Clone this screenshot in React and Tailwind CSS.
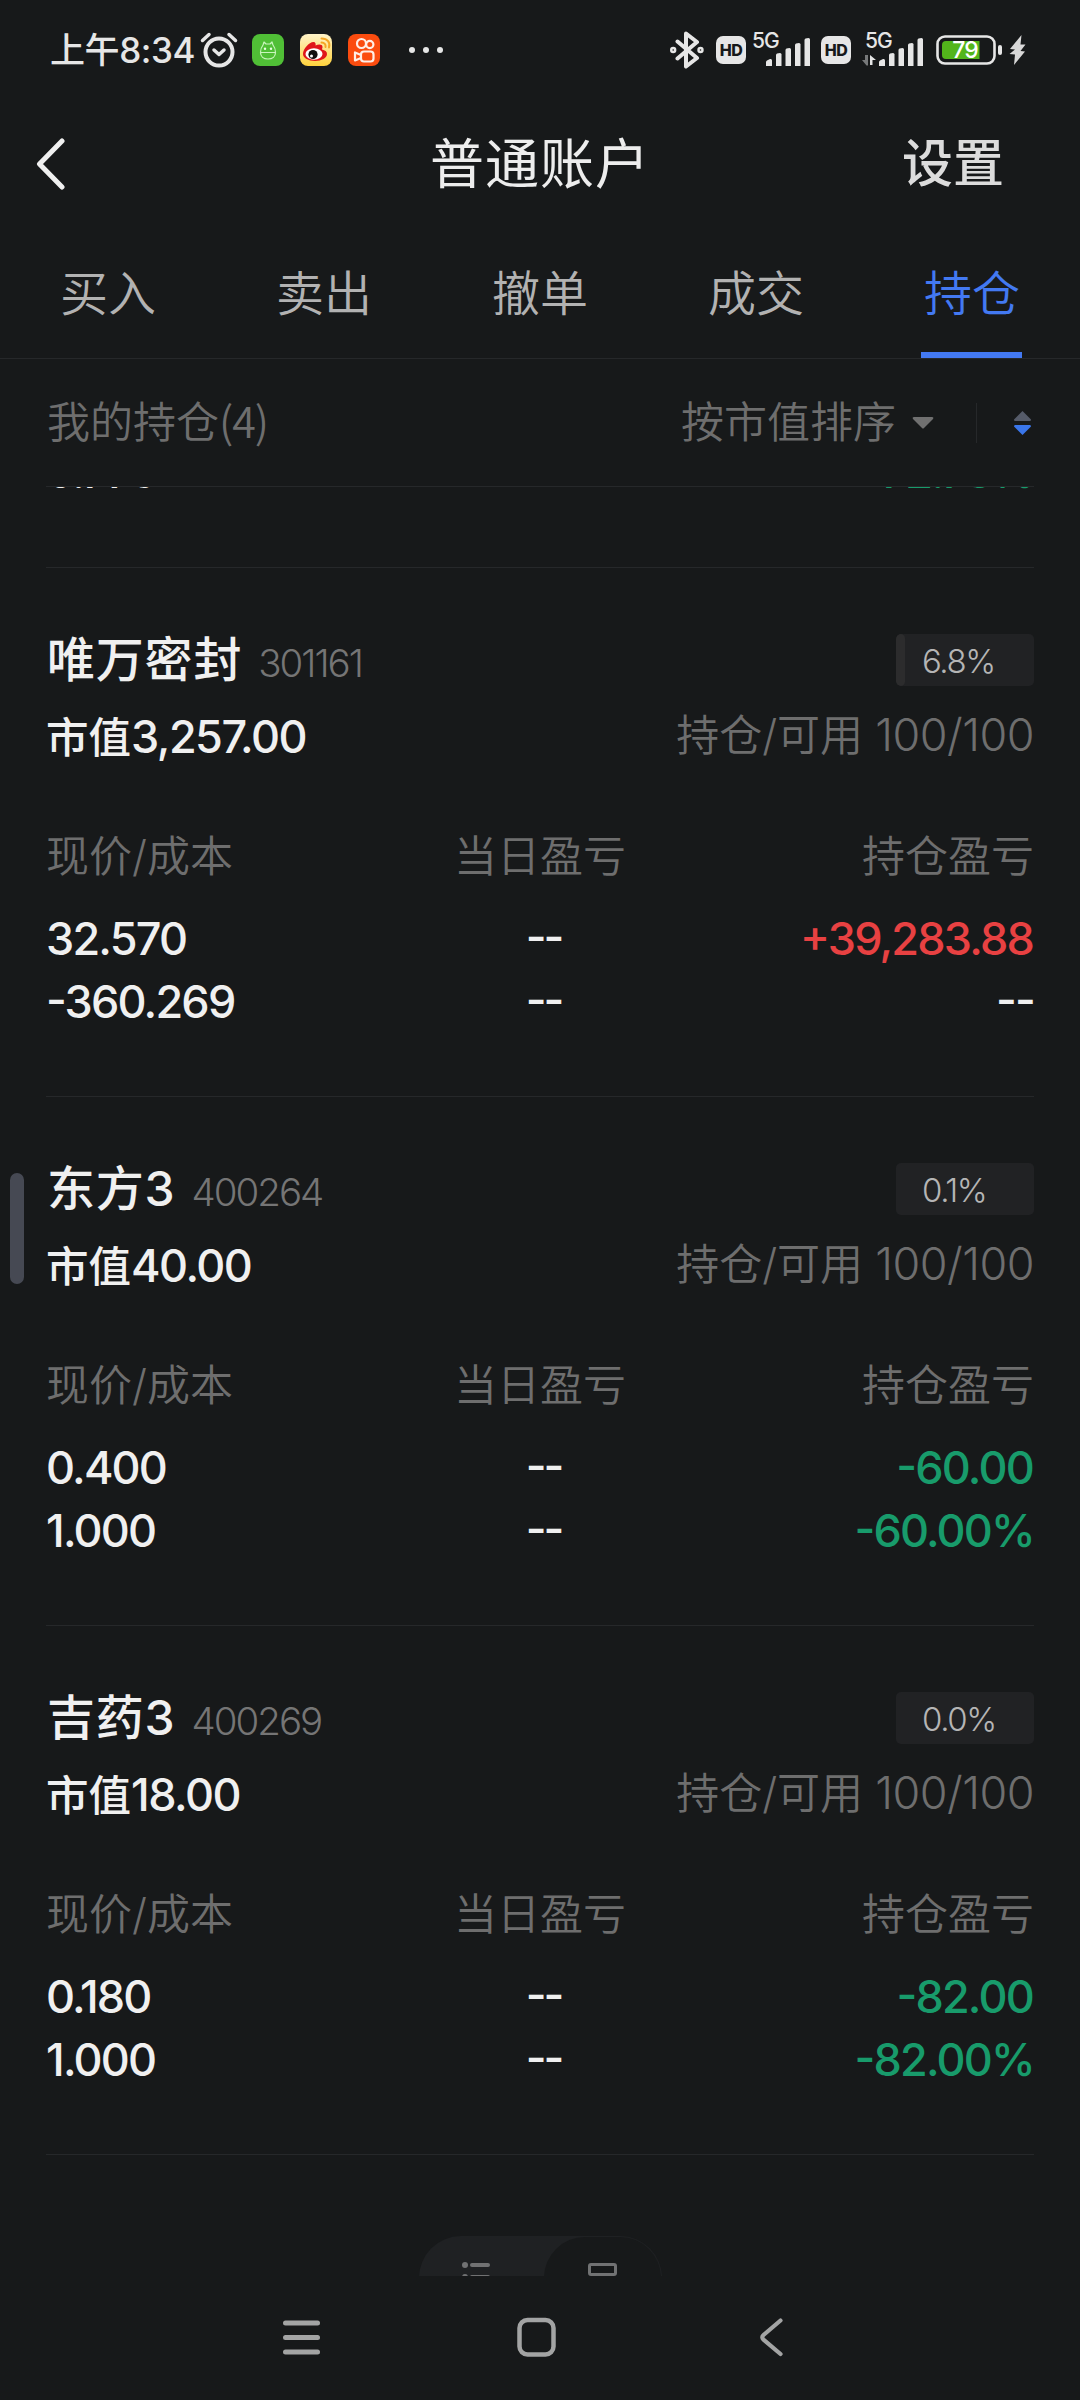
const TABS = ['买入', '卖出', '撤单', '成交', '持仓']

const TONES = {
  up: 'text-[#e84142]',
  down: 'text-[#189b6b]',
  flat: 'text-[#f0f0f0]',
}

const HOLDINGS = [
  { name: '唯万密封', code: '301161', share: 6.8, value: '3,257.00', price: '32.570', cost: '-360.269', pnl: '+39,283.88', pnlTone: 'up', pct: '--', pctTone: 'flat' },
  { name: '东方3', code: '400264', share: 0.1, value: '40.00', price: '0.400', cost: '1.000', pnl: '-60.00', pnlTone: 'down', pct: '-60.00%', pctTone: 'down' },
  { name: '吉药3', code: '400269', share: 0, value: '18.00', price: '0.180', cost: '1.000', pnl: '-82.00', pnlTone: 'down', pct: '-82.00%', pctTone: 'down' },
]

// ── Status bar ───────────────────────────────────────────────

function AlarmIcon() {
  return (
    <svg className="ml-[5px] shrink-0" width="38" height="36" viewBox="0 0 38 36" fill="none" stroke="#e6e6e6" strokeLinecap="round">
      <circle cx="19" cy="20" r="13.5" strokeWidth="4" />
      <path d="M2.500 8.500L9 2.500M35.500 8.500L29 2.500" strokeWidth="3.500" />
      <path d="M14 18l5 4.500 5-4.500" strokeWidth="3.500" strokeLinejoin="round" />
    </svg>
  )
}

function AppIcons() {
  return (
    <>
      <svg className="ml-[14px] shrink-0" width="32" height="32" viewBox="0 0 32 32" fill="none">
        <rect width="32" height="32" rx="8" fill="#50bf36" />
        <path d="M8.500 18.500h15c0 4-3 6.500-7.500 6.500s-7.500-2.500-7.500-6.500c0-3 .5-5 2.500-7.500l1-3 2 2h4l2-2 1 3c2 2.500 2.500 4.500 2.500 7.500" stroke="#c9f5bd" strokeWidth="1.200" strokeLinejoin="round" />
        <circle cx="13" cy="14.800" r="1.200" fill="#e9ffe2" />
        <circle cx="19" cy="14.800" r="1.200" fill="#e9ffe2" />
      </svg>
      <svg className="ml-4 shrink-0" width="32" height="32" viewBox="0 0 32 32" fill="none">
        <defs>
          <linearGradient id="wb" x1="0" y1="0" x2="0" y2="1">
            <stop offset="0" stopColor="#fff3c9" />
            <stop offset="1" stopColor="#ffd23c" />
          </linearGradient>
        </defs>
        <rect width="32" height="32" rx="8" fill="url(#wb)" />
        <path d="M3 20c0-5 6-12 10.500-12 2 0 2.500 2 2 3.500 3-1.500 7-1.500 7 1.500 0 1-.5 1.500-.5 2.500 3 .8 5 2 5 4.500 0 4-5.500 7-12 7S3 24 3 20z" fill="#e0161b" />
        <ellipse cx="14" cy="20" rx="8.500" ry="5.800" fill="#fff" />
        <circle cx="13" cy="20.500" r="4.600" fill="#111" />
        <circle cx="11.500" cy="22" r="1.500" fill="#fff" />
        <path d="M21.500 8.500c3 0 4.500 2 4 4.500M21.500 4.500c6 0 9 4 7.500 9" stroke="#f5a623" strokeWidth="2" strokeLinecap="round" />
      </svg>
      <svg className="ml-4 shrink-0" width="32" height="32" viewBox="0 0 32 32" fill="none" stroke="#ffeee6" strokeWidth="2.200">
        <rect width="32" height="32" rx="8" fill="#fb4c0f" stroke="none" />
        <circle cx="13.500" cy="9.500" r="4.500" />
        <circle cx="21.800" cy="10.500" r="3.600" />
        <rect x="13" y="17.500" width="12.500" height="10" rx="3" />
        <path d="M13 21l-6-2.500v8l6-2.500" strokeLinejoin="round" />
      </svg>
    </>
  )
}

function HdBadge() {
  return (
    <span className="flex h-[28px] w-[30px] shrink-0 items-center justify-center rounded-[7px] bg-[#e6e6e6] text-[16px] font-extrabold tracking-[-0.5px] text-[#17191a]">HD</span>
  )
}

function Signal({ data }) {
  return (
    <span className="relative ml-[6px] h-[34px] w-[58px] shrink-0">
      <span className="absolute -top-px left-0 text-[21px] leading-[18px] font-medium tracking-[-1px]">5G</span>
      <svg className="absolute inset-0" width="58" height="34" viewBox="0 0 58 34" fill="#e6e6e6">
        <path d="M14 33v-4q0-1 1-1.500l3-1.500q2-.5 2 1.500V33z" />
        <path d="M24 33V22q0-1 1-1.500l3-.5q1.500 0 1.500 1.500V33z" />
        <path d="M33.500 33V17q0-1 1-1.500l3-.5q1.500 0 1.500 1.500V33z" />
        <path d="M43 33V12q0-1 1-1.500l3-.5q1.500 0 1.500 1.500V33z" />
        <path d="M52.500 33V7q0-1 1-1.500l3-.5q1.500 0 1.500 1.500V33z" />
      </svg>
      {data && (
        <svg className="absolute top-[22px] -left-[3px]" width="14" height="11" viewBox="0 0 14 11">
          <path d="M0 5h3V0h3v10.500H4.500z" fill="#77797a" />
          <path d="M8 0v10h2.500V5H14z" fill="#e6e6e6" />
        </svg>
      )}
    </span>
  )
}

function StatusBar() {
  return (
    <div className="flex h-[100px] items-center pr-[54px] pl-[50px] text-[#e6e6e6]">
      <span className="w-[145px] text-[35px] font-medium tracking-[-0.4px] whitespace-nowrap">上午8:34</span>
      <AlarmIcon />
      <AppIcons />
      <svg className="ml-[29px] shrink-0" width="34" height="6" viewBox="0 0 34 6" fill="#e6e6e6">
        <circle cx="3" cy="3" r="3" />
        <circle cx="17" cy="3" r="3" />
        <circle cx="31" cy="3" r="3" />
      </svg>
      <div className="ml-auto flex items-center">
        <svg className="mr-3 shrink-0" width="34" height="38" viewBox="0 0 34 38" fill="none" stroke="#e6e6e6" strokeWidth="4" strokeLinejoin="round" strokeLinecap="round">
          <path d="M7.500 10.500L27 27l-11 8.500v-33L27 11 7.500 27.500" />
          <circle cx="3.200" cy="19" r="1.200" />
          <circle cx="30.500" cy="19" r="1.200" />
        </svg>
        <HdBadge />
        <Signal />
        <span className="w-[11px]" />
        <HdBadge />
        <span className="w-[8px]" />
        <Signal data />
        <svg className="ml-[13px] shrink-0" width="66" height="30" viewBox="0 0 66 30" fill="none">
          <rect x="1.500" y="1.500" width="57" height="27" rx="7.500" stroke="#e6e6e6" strokeWidth="2.600" />
          <path d="M10 6h33.500v18H10q-4 0-4-4V10q0-4 4-4z" fill="#52b51b" />
          <rect x="62" y="10" width="4" height="10" rx="2" fill="#e6e6e6" />
          <text x="29" y="23" textAnchor="middle" fontSize="23" fontWeight="500" letterSpacing="-1" fill="#fff">79</text>
        </svg>
        <svg className="ml-[7px] shrink-0" width="17" height="30" viewBox="0 0 17 30" fill="#d8d8d8">
          <path d="M12.500 0L1 14l5 .5L.5 19l5.500.5L5 30l11-13.500-4.500-.5 5-6.500h-5z" />
        </svg>
      </div>
    </div>
  )
}

// ── Header and tabs ──────────────────────────────────────────

function Header() {
  return (
    <header className="grid h-[126px] grid-cols-3 items-center pt-0.5 pr-[76px] pl-[36px] text-[#ededed]">
      <svg width="30" height="52" viewBox="0 0 30 52" fill="none" stroke="#f0f0f0" strokeWidth="5" strokeLinecap="round" strokeLinejoin="round">
        <path d="M26 3L3.500 26 26 49" />
      </svg>
      <h1 className="pl-[40px] text-center text-[54px] tracking-[1px] whitespace-nowrap">普通账户</h1>
      <button className="text-right text-[51px] font-medium text-[#dcdcdc]">设置</button>
    </header>
  )
}

function Tabs() {
  return (
    <nav className="grid h-[133px] grid-cols-5 border-b border-[#26282a] text-[48px] font-[350] text-[#b2b2b2]">
      {TABS.map(tab => (
        <div key={tab} className={`flex flex-col items-center ${tab === '持仓' ? 'text-[#4379f2]' : ''}`}>
          <span className="flex h-[126px] items-center pt-[10px]">{tab}</span>
          {tab === '持仓' && <span className="mr-px h-1.5 w-[101px] bg-[#4379f2]" />}
        </div>
      ))}
    </nav>
  )
}

function SortBar() {
  return (
    <div className="mr-[46px] ml-[46px] flex h-[128px] items-center border-b border-[#26282a] text-[43px] leading-none font-[350] text-[#6e6e6e]">
      <span className="pb-1 pl-px">
        我的持仓<span className="font-['Noto_Sans_CJK_SC'] tracking-[-1px]">(4)</span>
      </span>
      <span className="ml-auto">按市值排序</span>
      <svg className="ml-[16px]" width="22" height="12" viewBox="0 0 22 12" fill="#707070">
        <path d="M2 0h18q2 0 1 2l-9 9q-1 1-2 0L1 2Q0 0 2 0z" />
      </svg>
      <span className="ml-[42px] h-10 w-px bg-[#26282a]" />
      <svg className="mr-[3px] ml-[37px]" width="17" height="24" viewBox="0 0 17 24">
        <path d="M8.500 0L17 8.500q0 1.500-1 1.500H1q-1 0-1-1.500z" fill="#555b69" />
        <path d="M8.500 24L17 15.500q0-1.500-1-1.500H1q-1 0-1 1.500z" fill="#3a76ea" />
      </svg>
    </div>
  )
}

// ── Holdings ─────────────────────────────────────────────────

// last line of the first holding, scrolled under the sort bar
function ClippedRow() {
  return (
    <div className="mx-[46px] flex h-[81px] items-start justify-between overflow-hidden border-b border-[#26282a] text-[45px] leading-none font-medium tracking-[-2px]">
      <span className="-mt-[38px] text-[#f0f0f0]">0.779</span>
      <span className="-mt-[38px] text-[#189b6b]">-72.78%</span>
    </div>
  )
}

function HoldingCard({ item }) {
  return (
    <section className="mx-[46px] h-[529px] border-b border-[#26282a] pt-[60px] text-[#f0f0f0]">
      <div className="flex h-[62px] items-center pl-px">
        <h2 className="pt-0.5 text-[48px] font-medium tracking-[0.8px]">{item.name}</h2>
        <span className="mt-2.5 ml-[16px] text-[38.5px] font-light tracking-[-2px] text-[#757575]">{item.code}</span>
        <div className="relative mt-0.5 ml-auto flex h-[52px] w-[138px] items-center overflow-hidden rounded-[5px] bg-[#212224] pt-1 pl-[26px]">
          <span className="absolute inset-y-0 left-0 rounded-[5px] bg-[#2c2c2d]" style={{ width: `${item.share > 1 ? item.share : 0}%` }} />
          <span className="text-[33px] font-light tracking-[-1.4px] text-[#b5b5b5]">{item.share.toFixed(1)}%</span>
        </div>
      </div>
      <div className="mt-4 flex h-[60px] items-center justify-between">
        <span className="pt-0.5 text-[42.5px] font-medium">
          市值<span className="text-[45px] tracking-[-1.5px]">{item.value}</span>
        </span>
        <span className="pb-0.5 text-[43px] font-[350] text-[#6e6e6e]">
          持仓/可用 <span className="text-[45px] font-[350] tracking-[-0.5px]">100/100</span>
        </span>
      </div>
      <div className="mt-[58px] grid h-[62px] grid-cols-3 items-center text-[43px] font-[350] text-[#6e6e6e]">
        <span>现价/成本</span>
        <span className="text-center">当日盈亏</span>
        <span className="text-right">持仓盈亏</span>
      </div>
      <div className="mt-[21px] grid grid-cols-3 text-[45px] leading-[63px] font-medium tracking-[-1.8px] [font-feature-settings:'case']">
        <span>{item.price}</span>
        <span className="pl-[7px] text-center tracking-[-3px]">--</span>
        <span className={`pr-px text-right ${TONES[item.pnlTone]}`}>{item.pnl}</span>
        <span>{item.cost}</span>
        <span className="pl-[7px] text-center tracking-[-3px]">--</span>
        <span className={`text-right ${TONES[item.pctTone]}`}>{item.pct}</span>
      </div>
    </section>
  )
}

// ── Bottom ───────────────────────────────────────────────────

function ViewSwitch() {
  return (
    <div className="flex h-[121px] items-start justify-center overflow-hidden pt-[81px] pl-px">
      <div className="flex h-[84px] w-[243px] shrink-0 justify-end rounded-full bg-[#1f2123] p-px">
        <div className="flex flex-1 justify-center pt-[25px] pr-[12px]">
          <svg width="28" height="24" viewBox="0 0 28 24" fill="#717273">
            <circle cx="3" cy="3" r="3" />
            <rect x="8" y="1" width="20" height="4" rx="2" />
            <circle cx="3" cy="15" r="3" />
            <rect x="8" y="13" width="20" height="4" rx="2" />
          </svg>
        </div>
        <div className="flex w-[117px] justify-center rounded-full bg-[#17191a] pt-[26px]">
          <span className="h-[13px] w-[29px] rounded-[3px] border-[3px] border-[#717273]" />
        </div>
      </div>
    </div>
  )
}

function NavBar() {
  return (
    <div className="flex h-[124px] items-start pt-[41px] pl-[283px]">
      <svg width="37" height="40" viewBox="0 0 37 40" fill="#a3a4a4">
        <rect y="3.500" width="37" height="5" rx="2.500" />
        <rect y="18" width="37" height="5" rx="2.500" />
        <rect y="32.500" width="37" height="5" rx="2.500" />
      </svg>
      <svg className="ml-[197px]" width="39" height="40" viewBox="0 0 39 40" fill="none" stroke="#a3a4a4" strokeWidth="4.500">
        <rect x="2.500" y="3" width="34" height="34.500" rx="8" />
      </svg>
      <svg className="ml-[203px]" width="24" height="40" viewBox="0 0 24 40" fill="none" stroke="#a3a4a4" strokeWidth="4.200" strokeLinecap="round">
        <path d="M21.500 3.500L4.500 18q-2.500 2.300 0 4.600L21.500 37" />
      </svg>
    </div>
  )
}

export default function App() {
  return (
    <div className="relative h-[2400px] w-[1080px] overflow-hidden bg-[#17191a] font-['Inter','Noto_Sans_CJK_SC',sans-serif]">
      <StatusBar />
      <Header />
      <Tabs />
      <SortBar />
      <ClippedRow />
      {HOLDINGS.map(item => (
        <HoldingCard key={item.code} item={item} />
      ))}
      <ViewSwitch />
      <NavBar />
      <span className="absolute top-[1173px] left-[10px] h-[111px] w-[14px] rounded-full bg-[#464953]" />
    </div>
  )
}
